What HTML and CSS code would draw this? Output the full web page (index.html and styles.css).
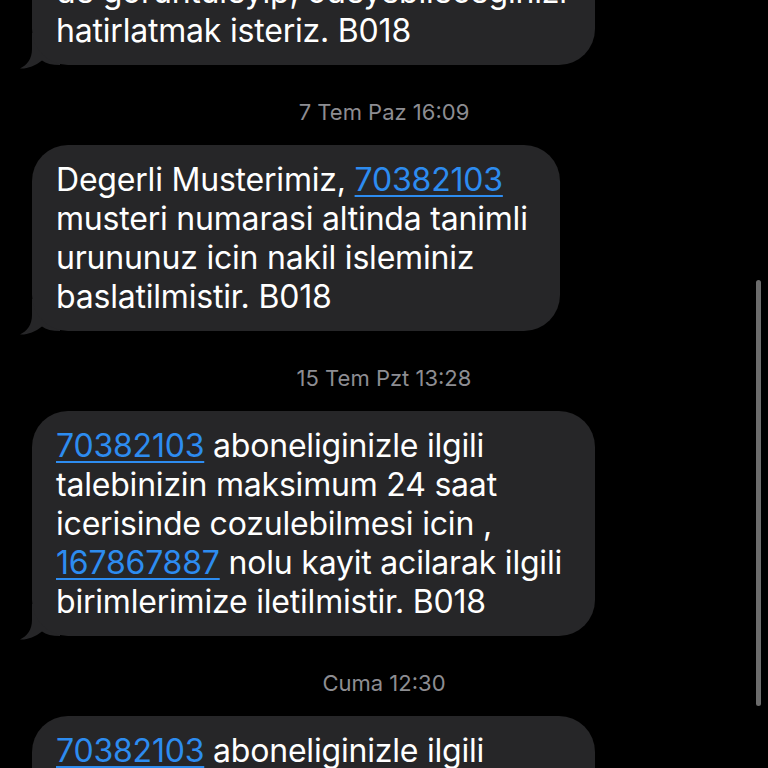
FILE: index.html
```html
<!DOCTYPE html>
<html lang="tr">
<head>
<meta charset="utf-8">
<title>Mesajlar</title>
<link rel="stylesheet" href="styles.css">
</head>
<body>
<div class="screen">
  <div class="thread">
    <div class="bubble">de goruntuleyip, odeyebileceginizi hatirlatmak isteriz. B018<svg class="tail" viewBox="0 0 40 36" aria-hidden="true"><path d="M12 0 L12 16 C12 26 7 32 0 35.5 C7 36 15 33 22 27.5 C26 30.5 32 32 40 32 L40 0 Z"/></svg></div>
    <div class="stamp">7 Tem Paz 16:09</div>
    <div class="bubble narrow">Degerli Musterimiz, <a class="link">70382103</a> musteri numarasi altinda tanimli urununuz icin nakil isleminiz baslatilmistir. B018<svg class="tail" viewBox="0 0 40 36" aria-hidden="true"><path d="M12 0 L12 16 C12 26 7 32 0 35.5 C7 36 15 33 22 27.5 C26 30.5 32 32 40 32 L40 0 Z"/></svg></div>
    <div class="stamp">15 Tem Pzt 13:28</div>
    <div class="bubble"><a class="link">70382103</a> aboneliginizle ilgili talebinizin maksimum 24 saat icerisinde cozulebilmesi icin , <a class="link">167867887</a> nolu kayit acilarak ilgili birimlerimize iletilmistir. B018<svg class="tail" viewBox="0 0 40 36" aria-hidden="true"><path d="M12 0 L12 16 C12 26 7 32 0 35.5 C7 36 15 33 22 27.5 C26 30.5 32 32 40 32 L40 0 Z"/></svg></div>
    <div class="stamp">Cuma 12:30</div>
    <div class="bubble"><a class="link">70382103</a> aboneliginizle ilgili talebinizin maksimum 24 saat icerisinde cozulebilmesi icin , nolu kayit acilarak ilgili birimlerimize iletilmistir. B018</div>
  </div>
  <div class="scrollbar"></div>
</div>
</body>
</html>
```
FILE: styles.css
```css
html, body {
  margin: 0;
  padding: 0;
  background: #000;
}
.screen {
  position: relative;
  width: 768px;
  height: 768px;
  overflow: hidden;
  background: #000;
  font-family: Inter, "Noto Sans", sans-serif;
}
.thread {
  position: relative;
  z-index: 0;
  display: flex;
  flex-direction: column;
  align-items: flex-start;
  padding-left: 32px;
  margin-top: -43px;
}
.bubble {
  position: relative;
  box-sizing: border-box;
  width: 563px;
  padding: 15px 20px 15px 24px;
  background: #262628;
  color: #fff;
  border-radius: 36px;
  font-size: 32px;
  line-height: 39px;
  letter-spacing: -0.2px;
}
.bubble.narrow {
  width: 528px;
}
.tail {
  position: absolute;
  z-index: -1;
  left: -12px;
  bottom: -4px;
  width: 40px;
  height: 36px;
  fill: #262628;
}
.link {
  color: #2d8cf0;
  text-decoration: underline;
  text-decoration-thickness: 2px;
  text-underline-offset: 4px;
}
.stamp {
  align-self: center;
  margin: 35px 0 21px -32px;
  font-size: 22px;
  line-height: 24px;
  font-weight: 400;
  color: #8d8d92;
}
.scrollbar {
  position: absolute;
  left: 756px;
  top: 280px;
  width: 5px;
  height: 426px;
  border-radius: 3px;
  background: #6c6c6c;
}
```
